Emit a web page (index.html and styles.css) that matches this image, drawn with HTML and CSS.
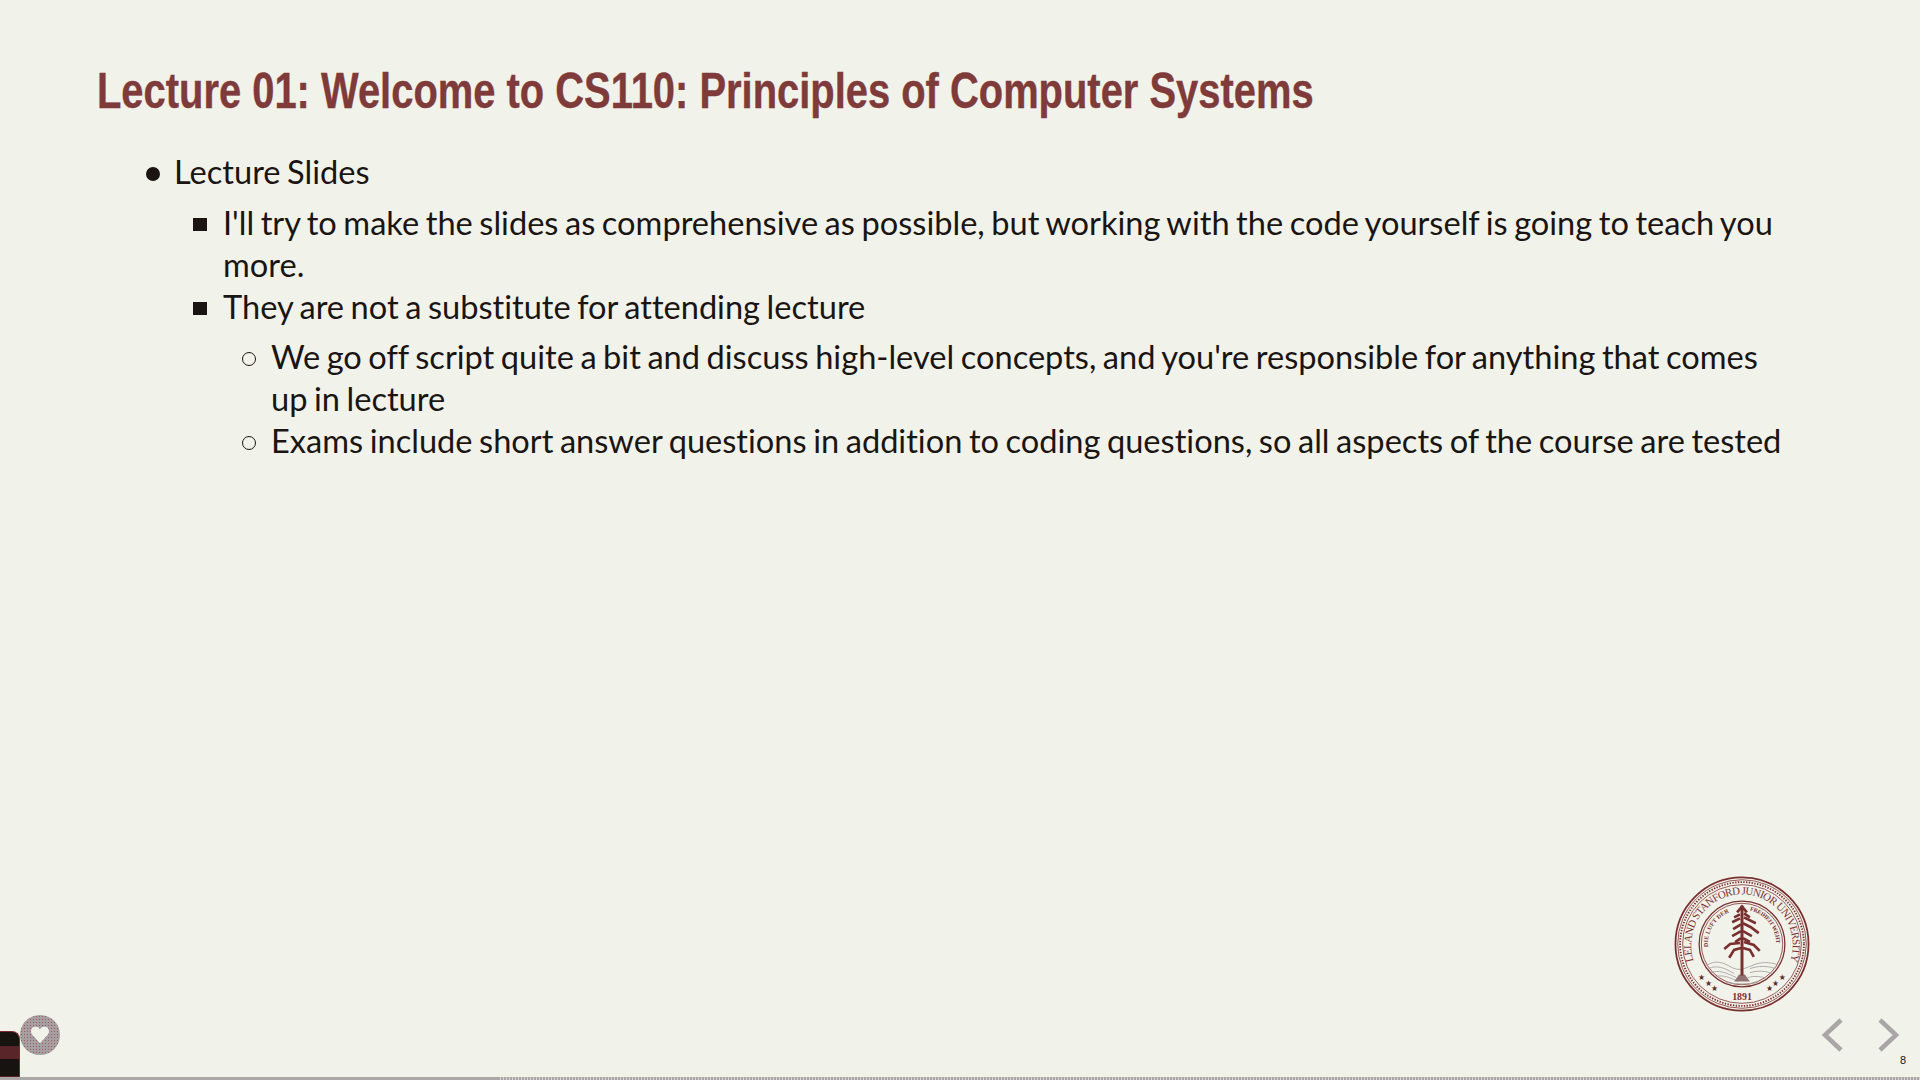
FILE: index.html
```html
<!DOCTYPE html>
<html lang="en">
<head>
<meta charset="utf-8">
<title>Lecture 01: Welcome to CS110</title>
<link rel="stylesheet" href="styles.css">
</head>
<body>
<main class="slide">
  <h1 class="title">Lecture 01: Welcome to CS110: Principles of Computer Systems</h1>
  <ul class="l1">
    <li>Lecture Slides
      <ul class="l2">
        <li>I'll try to make the slides as comprehensive as possible, but working with the code yourself is going to teach you more.</li>
        <li>They are not a substitute for attending lecture
          <ul class="l3">
            <li>We go off script quite a bit and discuss high-level concepts, and you're responsible for anything that comes up in lecture</li>
            <li>Exams include short answer questions in addition to coding questions, so all aspects of the course are tested</li>
          </ul>
        </li>
      </ul>
    </li>
  </ul>
</main>

<svg class="seal" viewBox="-70 -70 140 140" aria-label="Stanford seal">
  <defs>
    <path id="arcOuter" d="M -49 17 A 51.5 51.5 0 1 1 49 17"/>
    <path id="arcInnerL" d="M -34.5 3 A 34.6 34.6 0 0 1 -7 -34"/>
    <path id="arcInnerR" d="M 8 -34 A 34.6 34.6 0 0 1 34.5 3"/>
  </defs>
  <g fill="none" stroke="#7a2f2f">
    <circle r="67.5" stroke-width="1.8"/>
    <circle r="65.2" stroke-width="0.8"/>
    <circle r="62.8" stroke-width="1.9" stroke-dasharray="1.4 1.4"/>
    <circle r="60.2" stroke-width="0.8"/>
    <circle r="43.5" stroke-width="1.3"/>
    <circle r="41.3" stroke-width="0.8"/>
  </g>
  <text class="seal-outer"><textPath href="#arcOuter" textLength="194" lengthAdjust="spacing">LELAND STANFORD JUNIOR UNIVERSITY</textPath></text>
  <text class="seal-inner"><textPath href="#arcInnerL" textLength="44" lengthAdjust="spacing">DIE LUFT DER</textPath></text>
  <text class="seal-inner"><textPath href="#arcInnerR" textLength="46" lengthAdjust="spacing">FREIHEIT WEHT</textPath></text>
  <text class="seal-year" x="0" y="57" text-anchor="middle">1891</text>
  <g class="seal-stars">
    <text x="-41" y="37">★</text><text x="-34" y="43">★</text><text x="-28" y="48">★</text>
    <text x="41" y="37">★</text><text x="34" y="43">★</text><text x="28" y="48">★</text>
  </g>
  <g fill="none" stroke="#aaa4a6" stroke-width="0.9">
    <path d="M-36 22 C-28 16 -20 18 -10 24 C-2 28 4 24 10 22 C18 18 28 18 36 21"/>
    <path d="M-34 25 C-26 21 -18 24 -8 30"/>
    <path d="M-31 29 C-24 26 -16 29 -6 34"/>
    <path d="M-26 33 C-20 31 -12 34 -4 38"/>
    <path d="M8 25 C16 22 26 22 34 25"/>
    <path d="M8 29 C16 27 24 27 30 30"/>
    <path d="M6 34 C14 32 20 33 25 35"/>
    <path d="M-16 39 C-6 41 6 41 16 39"/>
  </g>
  <path d="M-8 38 L-3 31 L3 31 L8 38 Z" fill="#8f7274"/>
  <g fill="none" stroke="#7a2f2f" stroke-width="2.7">
    <path d="M0 -39 L0 32" stroke-width="3"/>
    <path d="M-5 -32 L0 -38 L5 -32"/>
    <path d="M-8 -27 L-2 -30 M2 -31 L8 -27"/>
    <path d="M-10 -22 L-2 -26 M2 -27 L14 -21"/>
    <path d="M-9 -15 L-1 -20 M1 -21 L9 -17 L17 -11"/>
    <path d="M-10 -8 L-1 -13 M1 -13 L10 -8"/>
    <path d="M-7 -2 L-1 -6 M1 -6 L8 -2"/>
    <path d="M-18 5 L-12 0 L-2 -1"/>
    <path d="M2 -2 L12 1 L18 7"/>
    <path d="M-13 14 L-8 6 L-1 4"/>
    <path d="M1 4 L8 6 L12 13"/>
  </g>
</svg>

<nav class="nav" aria-label="Slides">
  <svg class="chev" viewBox="0 0 24 36"><path d="M21 3 L5 18 L21 33"/></svg>
  <svg class="chev" viewBox="0 0 24 36"><path d="M3 3 L19 18 L3 33"/></svg>
</nav>
<span class="page">8</span>

<div class="heart-badge">
  <svg viewBox="0 0 24 22"><path d="M12 21 L2 10 C-1 5 3 0 7 1 C9 1 11 2 12 4 C13 2 15 1 17 1 C21 0 25 5 22 10 Z"/></svg>
</div>
<div class="tab"></div>
<div class="progress"></div>
</body>
</html>
```

FILE: styles.css
```css
html, body {
  margin: 0;
  height: 100%;
  overflow: hidden;
  background: #f1f2ea;
}

.slide {
  padding: 64px 97px 0;
  color: #1a1512;
  font-family: Lato, "Liberation Sans", sans-serif;
  font-size: 32.6px;
  line-height: 42px;
  word-spacing: -1.8px;
  font-variant-ligatures: none;
}

.title {
  margin: 0 0 33px;
  color: #7f3a3a;
  font-family: "Liberation Sans", sans-serif;
  font-size: 50px;
  line-height: 54px;
  font-weight: 700;
  word-spacing: 0;
  white-space: nowrap;
  transform: scaleX(0.798);
  transform-origin: left center;
  -webkit-text-stroke: 0.4px #7f3a3a;
}

ul {
  margin: 0;
  padding: 0;
  list-style: none;
}

li {
  position: relative;
}

li::before {
  content: "";
  position: absolute;
  top: 16px;
  box-sizing: border-box;
}

.l1 {
  padding-left: 77px;
  margin-right: 35px;
}

.l1 > li::before {
  left: -28px;
  width: 14px;
  height: 14px;
  border-radius: 50%;
  background: #1a1512;
}

.l2 {
  padding-left: 49px;
  margin-top: 9px;
}

.l2 > li::before {
  left: -30px;
  width: 14px;
  height: 13px;
  background: #1a1512;
}

.l3 {
  padding-left: 48px;
  margin-top: 8px;
}

.l3 > li::before {
  left: -29px;
  width: 14px;
  height: 14px;
  border: 1.6px solid #1a1512;
  border-radius: 50%;
}

.seal {
  position: absolute;
  left: 1673px;
  top: 875px;
  width: 138px;
  height: 138px;
}

.seal-outer {
  font-family: "Liberation Serif", serif;
  font-size: 11px;
  fill: #7a2f2f;
}

.seal-inner {
  font-family: "Liberation Serif", serif;
  font-size: 6px;
  font-weight: 700;
  fill: #7a2f2f;
}

.seal-year {
  font-family: "Liberation Serif", serif;
  font-size: 10px;
  font-weight: 700;
  fill: #7a2f2f;
}

.seal-stars {
  font-family: "DejaVu Sans", sans-serif;
  font-size: 8px;
  fill: #5a2c2c;
  text-anchor: middle;
}

.nav {
  position: absolute;
  left: 1820px;
  top: 1017px;
  display: flex;
  gap: 33px;
}

.chev {
  width: 24px;
  height: 36px;
  fill: none;
  stroke: #aaa6a8;
  stroke-width: 4.5;
}

.page {
  position: absolute;
  left: 1900px;
  top: 1053px;
  color: #1a1512;
  font-family: "Liberation Sans", sans-serif;
  font-size: 11px;
  line-height: 14px;
}

.heart-badge {
  position: absolute;
  left: 20px;
  top: 1015px;
  width: 40px;
  height: 40px;
  display: flex;
  align-items: center;
  justify-content: center;
  border-radius: 50%;
  background: radial-gradient(circle, #9c5c62 0.7px, transparent 1px) 0 0 / 3px 3px, #a59fa2;
}

.heart-badge svg {
  width: 20px;
  height: 18px;
  fill: #f1f2ea;
}

.tab {
  position: absolute;
  left: 0;
  top: 1031px;
  width: 19px;
  height: 49px;
  border: solid #7a2a2e;
  border-width: 1px 1px 0 0;
  border-top-right-radius: 8px;
  background: linear-gradient(#171310 0 14px, #5a2529 14px 27px, #171310 27px 44px, #5a2529 44px);
}

.progress {
  position: absolute;
  left: 0;
  right: 0;
  bottom: 0;
  height: 3px;
  background:
    linear-gradient(#aaa6a8, #aaa6a8) left / 500px 100% no-repeat,
    repeating-linear-gradient(90deg, #aaa6a8 0 2px, #d3d3cf 2px 3px);
}
```
